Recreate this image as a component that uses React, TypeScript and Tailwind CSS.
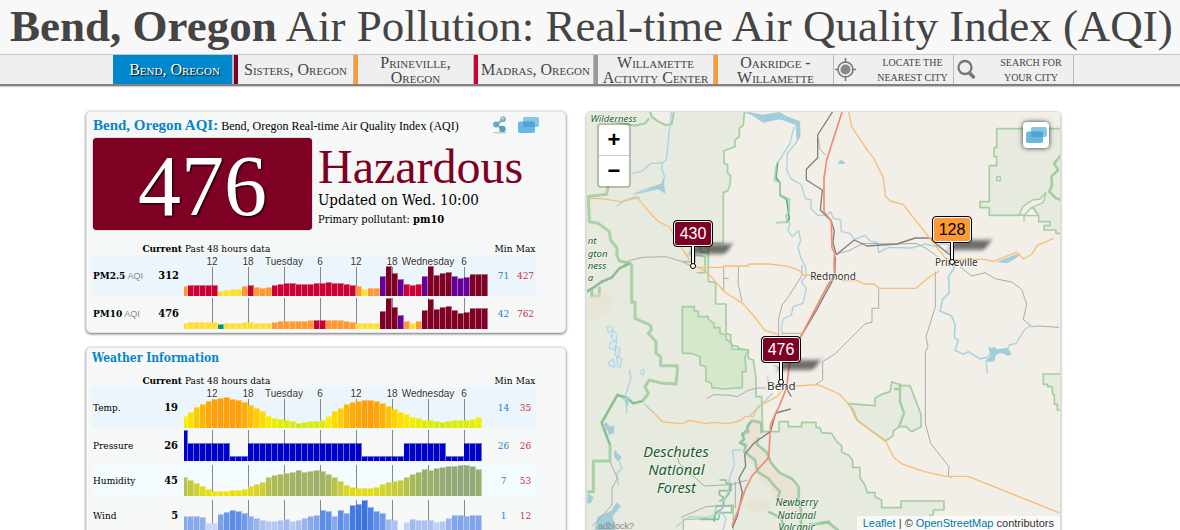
import React from "react";

type Bar = { h: number; color: string };
type Series = { name: string; unit?: string; current: number; min: number; max: number; bars: Bar[] };

const SERIF = "font-['Liberation_Serif','Times_New_Roman',serif]";
const WIDE = "font-['DejaVu_Serif_Condensed','DejaVu_Serif',serif]";

const AQI: Record<string, string> = {
  g: "#009966",
  y: "#ffde33",
  o: "#ff9933",
  r: "#cc0033",
  p: "#660099",
  m: "#7e0023",
};

const coded = (text: string): Bar[] =>
  text.split(" ").map((t) => ({ color: AQI[t[0]], h: Number(t.slice(1)) }));

const mix = (a: number[], b: number[], t: number) =>
  `rgb(${a.map((v, i) => Math.round(v + (b[i] - v) * t)).join(",")})`;

const ramp = (heights: number[], stops: number[][], lo: number, hi: number): Bar[] =>
  heights.map((h) => {
    const t = Math.min(1, Math.max(0, (h - lo) / (hi - lo))) * (stops.length - 1);
    const i = Math.min(stops.length - 2, Math.floor(t));
    return { h, color: mix(stops[i], stops[i + 1], t - i) };
  });

const rep = (h: number, n: number): number[] => Array(n).fill(h);

const pollutants: Series[] = [
  {
    name: "PM2.5", unit: "AQI", current: 312, min: 71, max: 427,
    bars: coded("o10 r11 r11 r11 r11 r11 y5 y6 y7 y7 o10 r11 o9 o8 o9 r11 r12 r13 r13 r12 r12 r12 r13 r13 r14 r13 r13 r12 r11 o10 y7 o8 o8 p20 m30 m23 p17 r12 r11 r12 p20 m30 m21 m23 m24 p20 p18 p19 m22 m22 m22"),
  },
  {
    name: "PM10", unit: "AQI", current: 476, min: 42, max: 762,
    bars: coded("y6 y7 y7 y7 y7 y7 g5 y6 y6 y6 y7 y7 y6 y6 y6 o7 o8 o8 o8 o8 o8 o9 r9 r9 o9 o9 o9 o8 o7 y6 y6 y6 y6 m18 m31 m22 p14 o8 y6 o8 m19 m30 m20 m22 m23 m19 m16 m17 m21 m21 m21"),
  },
];

const weather: Series[] = [
  {
    name: "Temp.", current: 19, min: 14, max: 35,
    bars: ramp(
      [12, 16, 21, 24, 27, 29, 30, 31, 29, 28, 26, 23, 20, 17, 12, 10, 9, 8, 7, 5, 6, 7, 7, 8, 12, 17, 20, 24, 26, 27, 28, 28, 27, 25, 22, 19, 16, 14, 11, 10, 8, 8, 7, 6, 7, 8, 8, 8, 9, 11],
      [[200, 236, 22], [250, 238, 0], [255, 205, 0], [255, 160, 10]], 5, 28),
  },
  {
    name: "Pressure", current: 26, min: 26, max: 26,
    bars: [31, ...rep(18, 7), ...rep(5, 3), ...rep(18, 19), ...rep(5, 7), ...rep(18, 7), ...rep(5, 3), ...rep(18, 3)].map((h) => ({ h, color: "#0000cc" })),
  },
  {
    name: "Humidity", current: 45, min: 7, max: 53,
    bars: ramp(
      [19, 16, 13, 10, 7, 5, 5, 5, 6, 6, 7, 10, 12, 14, 19, 21, 22, 23, 24, 26, 24, 25, 26, 25, 22, 19, 15, 11, 9, 8, 8, 8, 9, 12, 14, 15, 16, 19, 22, 24, 27, 26, 28, 29, 30, 30, 31, 31, 30, 27],
      [[236, 227, 10], [206, 209, 50], [168, 184, 92], [144, 168, 122]], 5, 31),
  },
  {
    name: "Wind", current: 5, min: 1, max: 12,
    bars: ramp(
      [15, 15, 15, 14, 8, 8, 17, 19, 21, 20, 18, 15, 13, 11, 10, 10, 11, 12, 10, 11, 13, 15, 16, 21, 20, 15, 21, 18, 26, 27, 31, 24, 20, 18, 12, 11, 4, 9, 12, 11, 11, 11, 9, 10, 13, 16, 16, 15, 16, 16],
      [[240, 244, 255], [160, 186, 240], [96, 144, 232], [58, 114, 224]], 4, 28),
  },
];

const ticks = ["12", "18", "Tuesday", "6", "12", "18", "Wednesday", "6"];

function BarChart({ bars, labels }: { bars: Bar[]; labels: boolean }) {
  const height = labels ? 40 : 31;
  return (
    <svg width="304" height={height} className="block">
      {ticks.map((_, i) => (
        <rect key={i} x={28 + 36 * i} y={labels ? 11 : 0} width="1" height={height} fill="#888" />
      ))}
      {bars.map((b, i) => {
        const x = i === 0 ? 0 : 6 * i - 2;
        const w = i === 0 ? 4 : 6;
        return (
          <g key={i} fill={b.color}>
            <rect x={x} y={height - b.h} width={w} height={b.h} opacity="0.55" />
            <rect x={x} y={height - b.h + 1} width={w - 1} height={b.h - 1} />
          </g>
        );
      })}
      {labels &&
        ticks.map((t, i) => (
          <text key={i} x={28 + 36 * i} y="9" textAnchor="middle" className="font-['Liberation_Sans',Arial,sans-serif] text-[10px]"
            fill="#333" stroke="#fff" strokeWidth="2" strokeOpacity="0.6" paintOrder="stroke">{t}</text>
        ))}
    </svg>
  );
}

function DataTable({ rows, bold }: { rows: Series[]; bold?: boolean }) {
  return (
    <table className={`w-[445px] table-fixed border-collapse text-[10px] leading-3 ${WIDE}`}>
      <colgroup>
        <col className="w-[58px]" />
        <col className="w-[34px]" />
        <col className="w-[309px]" />
        <col className="w-[21px]" />
        <col className="w-[23px]" />
      </colgroup>
      <thead>
        <tr className="h-[13px] whitespace-nowrap">
          <th colSpan={2} scope="col" className="p-0 pr-0.5 text-right font-bold">Current</th>
          <th scope="col" className="p-0 pl-px text-left font-normal">Past 48 hours data</th>
          <th scope="col" className="p-0 text-center font-normal">Min</th>
          <th scope="col" className="p-0 text-center font-normal">Max</th>
        </tr>
      </thead>
      <tbody>
        {rows.map((r, i) => (
          <tr key={r.name} className={i === 0 ? "h-[41px] bg-[#ecf5fb]" : i === 2 ? "h-[35px] bg-[#f4fbff]" : "h-[35px]"}>
            <th scope="row" className={`p-0 pl-px text-left whitespace-nowrap ${bold ? "font-bold" : "font-normal"}`}>
              {r.name}
              {r.unit && <span className="font-['Liberation_Sans',Arial,sans-serif] text-[9px] font-normal text-[#888]"> {r.unit}</span>}
            </th>
            <td className={`p-0 text-right text-[11px] font-bold ${bold ? "pr-[5px]" : "pr-1.5"}`}>{r.current}</td>
            <td className="p-0"><BarChart bars={r.bars} labels={i === 0} /></td>
            <td className="p-0 text-center text-[#2a83c4]">{r.min}</td>
            <td className="p-0 text-center text-[#cc3340]">{r.max}</td>
          </tr>
        ))}
      </tbody>
    </table>
  );
}

function ChatIcon() {
  return (
    <svg width="21" height="16" viewBox="0 0 21 16" className="block">
      <rect x="5" y="0" width="16" height="10" rx="2" fill="#86c6e6" />
      <rect x="0" y="4.500" width="17" height="11.500" rx="2" fill="#6bb8df" />
      <path d="M5 4.500h10q2 0 2 2V10H7q-2 0-2-2z" fill="#4ca5d4" />
    </svg>
  );
}

function ShareIcon() {
  return (
    <svg width="16" height="18" viewBox="0 0 16 18" className="block">
      <ellipse cx="8" cy="16.600" rx="7.500" ry="1" fill="#bbb" opacity="0.7" />
      <path d="M11 3.500 4.500 8.500 10.500 13" fill="none" stroke="#7fb3cc" strokeWidth="2.400" />
      <circle cx="11" cy="3.200" r="2.900" fill="#7fb3cc" />
      <circle cx="4" cy="8.500" r="2.900" fill="#6fa7c3" />
      <circle cx="10.500" cy="13" r="3.200" fill="#5c9dbf" />
      <circle cx="10.500" cy="2.600" r="1.300" fill="#b5d5e3" />
    </svg>
  );
}

const cities = [
  { label: "Bend, Oregon", bar: "", active: true },
  { label: "Sisters, Oregon", bar: "border-l-[#7e0023]" },
  { label: "Prineville, Oregon", bar: "border-l-[#ff9933]" },
  { label: "Madras, Oregon", bar: "border-l-[#cc0033]" },
  { label: "Willamette Activity Center", bar: "border-l-[#999999]" },
  { label: "Oakridge - Willamette", bar: "border-l-[#ff9933]" },
];

function Nav() {
  return (
    <nav className="flex h-8 shrink-0 border-t border-b-2 border-t-[#c4c4c4] border-b-[#808080] bg-[#efefef] pl-[113px] text-[#444] shadow-[0_1px_1px_#ccc]">
      {cities.map((c) =>
        c.active ? (
          <a key={c.label} href="#bend" className={`flex w-[120px] shrink-0 items-center justify-center border-r border-[#bbb] bg-[#0088cc] pl-1 text-base leading-[15px] text-white [font-variant:small-caps] [text-shadow:1px_1px_1px_#000] ${SERIF}`}>{c.label}</a>
        ) : (
          <a key={c.label} href="#city" className="flex w-[120px] shrink-0 border-l border-[#bbb]">
            <span className={`flex flex-1 items-center justify-center border-l-4 text-center text-base leading-[15px] [font-variant:small-caps] ${c.bar} ${SERIF}`}>{c.label}</span>
          </a>
        ),
      )}
      <a href="#nearest" className="flex w-[120px] shrink-0 items-center border-l border-[#bbb] pl-px">
        <svg width="21" height="23" viewBox="0 0 21 23">
          <circle cx="10.500" cy="11.500" r="7.500" fill="none" stroke="#777" strokeWidth="1.600" />
          <circle cx="10.500" cy="11.500" r="5" fill="#888" />
          <path d="M10.500 0v5M10.500 18v5M0 11.500h4M17 11.500h4" stroke="#777" strokeWidth="1.500" />
        </svg>
        <span className={`flex-1 pl-4 text-center text-[10px] leading-[15px] uppercase ${SERIF}`}>Locate the<br />nearest city</span>
      </a>
      <a href="#search" className="flex w-[121px] shrink-0 items-center border-x border-[#bbb] pl-[3px]">
        <svg width="18" height="21" viewBox="0 0 18 21" fill="none" stroke="#777">
          <circle cx="8" cy="8.500" r="6.500" strokeWidth="2.300" />
          <path d="m12.500 14 5 5" strokeWidth="3.500" />
        </svg>
        <span className={`flex-1 pl-3.5 text-center text-[10px] leading-[15px] uppercase ${SERIF}`}>Search for<br />your city</span>
      </a>
    </nav>
  );
}

const LAND = "#f2efe9";
const FOREST = "#e6eadf";
const EDGE = "#a3cfa0";

function Reserves() {
  return (
    <>
      <path fill={FOREST} stroke={EDGE} strokeWidth="5"
        d="M0 0H495L490 60 478 70V95L465 105V125L432 137V175L443 180V205L452 212 450 240 443 258 430 262V415H362V440L385 443V530L407 532V597H438V685L452 690V720L475 725V730L505 735V760L520 765 528 820V875H545L548 980H597V950H625V965H665V952H708V968H720L725 983 755 985 770 1010 785 1022V1042L805 1050 818 1065V1087H840V1118L855 1140 862 1163H885V1175L905 1185V1208H963V1188H1092V1215H1060V1230H1050V1300H0Z" />
      <path fill={LAND} stroke={EDGE} strokeWidth="6" d="M205 0 215 35 235 50 258 60 275 58 285 0Z" />
      <path stroke={EDGE} strokeWidth="6" d="M95 50 130 55 165 62 195 55 207 40" />
      <path fill="#d5e8cb" stroke={EDGE} strokeWidth="5" d="M307 605H343V618H355V635H385V643L402 655V668H420V685L438 690V702L455 715V732L505 735 495 755 498 800H487V848L430 852 395 848V835L378 828V785L360 780V755L335 745H307Z" />
      <path fill={LAND} stroke={EDGE} strokeWidth="4" d="M310 1300V1243L400 1241 410 1205 460 1200V1300" />
      <g stroke={EDGE} strokeWidth="9" opacity="0.9">
        <path d="M21 275 80 268 85 240M25 275 28 350 55 355 88 380 92 405 112 430 110 450 118 468 150 475 118 490 95 518 65 530 45 545 21 560" />
        <path d="M35 555V573H58V545M150 475 155 480V592H165V640L210 660 215 672 205 685 228 710V745L242 755V782H292V800L288 837 248 835 208 825 195 845 205 865 188 888 160 895 140 878 112 870 65 953 90 1020V1068H40V1160H21" />
      </g>
      <path stroke="#7eb98a" strokeWidth="4" d="M21 560 45 545 65 530 95 518 118 490 150 475M65 953 90 1020M65 953 112 870 140 878 160 895 188 888" />
      <path d="M307 470h38v-20l30 5v48h-25M362 415h23v28h-23" stroke={EDGE} strokeWidth="5" />

      <g transform="translate(720 0)">
        <path fill={FOREST} stroke={EDGE} strokeWidth="5" d="M740 71H530V128H522V155H530V182H508V290H480V308H508V331H597L612 310 640 308 656 332V350H690V362H672V375H708V385H740Z" />
        <path stroke={EDGE} strokeWidth="8" d="m740 130-12 10-8 15-18 20 12 20-20 20 2 25-8 20 20 20 32 10" />
        <path stroke={EDGE} strokeWidth="4" d="M530 215h11v12h-11zM612 350V332h44" />
        <path fill={LAND} stroke={EDGE} strokeWidth="4" d="m598 330 10-25 30-20 22-3 18-20-8 30-38 17-18 21z" />
      </g>
      <g transform="translate(720 630)">
        <path fill={FOREST} stroke={EDGE} strokeWidth="5" d="M84 266 165 272V250L185 238 210 230 215 200 235 208 240 212H270L303 298V335L275 350 258 335H238L220 348V362L196 378 112 316 100 285Z" />
        <path stroke={EDGE} strokeWidth="7" d="M240 205v55l12 35-15 40M222 222h15" />
        <path fill={FOREST} stroke={EDGE} strokeWidth="5" d="M740 177H670V208H683V215H697V235L703 240V268H712V285H740" />
        <path stroke={EDGE} strokeWidth="9" d="m0 625 25-3 30 25" />
      </g>
    </>
  );
}

function Newberry() {
  return (
    <g transform="translate(360 885)">
      <path fill="#eae3d5" d="M140 65h43v35l-8 32 30 25 12 30 25 30 55 50v70l-50-10-20-30-20-35-35-30-7-30-32-35-13-32z" />
      <path fill="#e9e0cf" opacity="0.7" d="m135 310 30-15 40 8 5 20-30 15-40-10z" />
      <g stroke="#98c79a" strokeWidth="8" opacity="0.85">
        <path d="M185 100 183 68 155 62 142 80 145 95 128 103 132 118 120 128 138 135 133 155 165 180 172 215 205 235 225 260 240 275 232 300" />
        <path d="m175 112-5 20 30 25 12 30 25 30 40 20 20 25-2 38 8 30v60M205 335l40 20 5 40M330 375l60-10" />
      </g>
      <path stroke="#7fc3a0" strokeWidth="4" d="m150 65-10 25-15 12 8 17-14 10 18 10" />
      <g stroke="#8cc592" strokeWidth="5">
        <path d="M58 240h20v10h15v22H58v12l15 10-15 10M45 318h50v20H60l-5 20H0" />
        <path d="m92 250-5 30-15 20-5 25-20 15-5 25" stroke="#72bba0" />
      </g>
    </g>
  );
}

function Waters() {
  return (
    <g transform="translate(18 15)">
      <g stroke="#a9d3e0" strokeWidth="4">
        <path d="m257 0-8 70-8 80-12 8-35 3-25 22-30 7M229 158l-2 20 8 20-3 30-40 5-50 20M232 225l5 25-20-15-60 15M92 288l20-14 50-12" />
        <path d="m478 8 50 12 50-10 20 15 42 15-4 50-32 40-2 50 12 25 32 20 12 40 18 5-2 25 20 20 25 2 15-12 8 20 22 5 2 35 25 5 15 18 30-12 18 18 20 3 4 30 30-15 70 2 40-12 32 8 20-10 35 10" />
        <path d="m624 50-12 50-38 60M600 330l12 10-6 20 12 20 20-18 6 30-8 20 8 30 15 30 2 25-15 18 15 20-10 45-30 10-5 25-25 12-5 30 4 10" />
        <path d="m562 765 20 10M560 850l-40 40-30 28M130 780l5 25-15 45 2 60M120 870l-12-5M545 800l2 20" />
        <path d="m88 1020 8 25 12 30-15 15 4 35M440 1020h25M440 1020l5 45-15 40-2 40-18 30-5 30 15 20-10 40M270 1250l40-30 50 2 45-12" />
        <path strokeWidth="5" d="m1105 465-3 15-14 18 2 50-20 20-8 35 35 15 10 25-2 40 12 8-10 30 25 12 15-8 35 22 18-5" />
        <path d="m1200 750 4 40M1200 745l20-20 40 5 10-25 20-5 25-40 20-15" />
      </g>
      <path stroke="#4fb08e" strokeWidth="5" d="m575 158-5 45 12 15v38l20 12 8 60-8 10" />
      <path stroke={EDGE} strokeWidth="6" d="m570 170-4 42 16 5v38l28 13v35l-10 15 6 18-36 2" opacity="0.8" />
      <g fill="#a2ced9">
        <path d="m205 228 22-8 6-20 2 45-20-8-45 10zM480 4l50 10 50-8 20 12 42 16 2 46-12 13-3-48-47-17-50 10zM35 1220l40-18 18-25 12 12-25 30 10 45H25zM50 950l10-15 12 15 12-5v25l-15 5-5-15zM115 870l15-8-5 30zM5 1150l18 12-8 18H3zM84 1022l24 20-12 12-12-14z" />
        <path d="m1206 710 12 5 5-5 12 8 30-5 12 20-12 5-20-12-15 10-5 18-20 2-3-8 12-10zM1232 456l45-18 28-9-12 14-30 17zM758 155l7-6 12 8v5h-20z" />
      </g>
      <path stroke="#92c6ed" strokeWidth="2" fill="#dbe8ea" d="m62 652 12-5 8 15-15 6zM80 660l14 12-3 22-15-8zM72 698l20-6-4 30-18-8zM88 710l14 4-5 28-10-6zM67 757l15-10 5 25-18-5zM92 740l16 5-6 30-8-8zM166 780l10-2-4 18-8-4z" />
    </g>
  );
}

function Roads() {
  return (
    <g transform="translate(18 15)">
      <g stroke="#ababab" strokeWidth="3">
        <path d="m4 540 60-30 65-58 40-10 70-2 48 14 32 16M175 882l30 28M362 866l22-12 50 2 20 4 30-18 30-8h25M72 1055l22 50-16 30v50l-60 65M275 1045l5 15 75 68 80-4 50-14M285 1222l75-32 60-4M413 470v70M458 470l-2 50 12 55M413 505h15M648 466v30l-38 60-22 30-10 40v100M585 670h60M448 1115v80" />
        <path d="m698 85 2 30 18 20M750 432l40-10 40-22 100 2 60-2 30 15 35 25M1122 470l35 28 40-10 30 18 50 10 30 22 15 45-10 45 25 22 20-2 62 4M1048 485v105l-28 90 6 30-8 15v215l16 60 55 70-2 25 10 10M878 535v60h-20v42l-20 4-90 90-38 24v55l-20 12" />
      </g>
      <g stroke="#808080" strokeWidth="4">
        <path d="m743 0-48 75v68l-34 35v32l48 30-6 60 32 32 10 30-4 35 9 35M750 435l55-45 38 18 90-6 55-18h45l20 20 45 35M748 440l-2 60-60 110-45 75M614 897l-45 12-15 55-50 35-28 35 3 35-20 35 10 45-15 70-15 35M598 830l18 30" />
      </g>
      <g stroke="#f6bf74" strokeWidth="4">
        <path d="m4 266 42 0 60 9 45-16 50 60 20 18 30 14 15 30 55 85 35 15 20 20 40 45 55 35 35 40 30 40 40 12M340 472h65l12-4h68l5-6h60l60 8 30 12 15 14h25M787 0l10 50 50 75 15 18 30 60 6 55 15 15 38 10 130 165h115l25 7 70-28 22 20 25-15 15-25 50-22M765 512h50l20 10h30l15 13h110l40-34 30-18" />
        <path d="m205 910 25 26 60 5 20-10 50 10 20-4 45 4 35-8 20-14h22l12-28 60-32 15-20M630 828l65-4 65 28 28 30 25 50 85 60 25 50 25 20 65 22 65 15h68l275 110" />
      </g>
      <path stroke="#f08a72" strokeWidth="5" d="m770 0-48 150-8 55v100l22 28 2 80 8 15-2 35 2 30-22 35-84 160-30 75-8 70-20 50-28 60-6 100-50 55-20 40-20 60-20 50" />
    </g>
  );
}

function MapDrawing() {
  return (
    <svg viewBox="21 21 1419 1254" preserveAspectRatio="xMidYMid slice" className="block h-full w-full" fill="none" strokeLinejoin="round">
      <rect x="0" y="0" width="1460" height="1300" fill={LAND} />
      <Reserves />
      <path fill="#eadfce" opacity="0.5" d="m25 580 50-25 28 25-20 45-58 30z" />
      <Newberry />
      <Waters />
      <Roads />
      <g className="font-['Noto_Sans',sans-serif]" stroke="#fff" strokeOpacity="0.6" strokeWidth="5" paintOrder="stroke" textAnchor="middle">
        <g fill="#17602a" className="italic">
          <text x="101" y="52" fontSize="29">Wilderness</text>
          <g fontSize="29" textAnchor="start">
            <text x="23" y="418">nt</text>
            <text x="23" y="455">gton</text>
            <text x="23" y="491">ness</text>
            <text x="23" y="527">a</text>
          </g>
          <g fontSize="44">
            <text x="288" y="1055">Deschutes</text>
            <text x="289" y="1110">National</text>
            <text x="289" y="1165">Forest</text>
          </g>
          <g fontSize="30">
            <text x="650" y="1204">Newberry</text>
            <text x="650" y="1241">National</text>
            <text x="650" y="1278">Volcanic</text>
          </g>
        </g>
        <g fill="#333">
          <text x="759" y="524" fontSize="30">Redmond</text>
          <text x="1129" y="483" fontSize="30">Prineville</text>
          <text x="604" y="854" fontSize="35">Bend</text>
        </g>
      </g>
      <text x="54" y="1272" fontSize="27" fill="#888" className="font-['Liberation_Sans',Arial,sans-serif]">adblock?</text>
    </svg>
  );
}

function Marker({ value, place, tone }: { value: number; place: string; tone: string }) {
  return (
    <button type="button" className={`absolute flex flex-col items-center ${place}`}>
      <span className="absolute top-6 left-5 h-2.5 w-9 skew-x-[-35deg] bg-black/55 blur-[2px]" />
      <span className={`relative flex h-[27px] w-10 items-center justify-center rounded-[4px] border border-black font-['Liberation_Sans',Arial,sans-serif] text-base leading-none shadow-[inset_0_0_0_1px_#fff] ${tone}`}>{value}</span>
      <span className="relative -mt-px h-[18px] w-1 border-x border-black bg-white" />
      <span className="relative -mt-px size-1.5 rounded-full border border-black bg-white" />
    </button>
  );
}

const card = "rounded-[5px] border border-[#e6e6e6] bg-[#f6f8f7] shadow-[0_1px_3px_rgba(0,0,0,0.6)]";

export default function App() {
  return (
    <div className="flex h-screen flex-col overflow-hidden bg-white text-black">
      <h1 className={`h-[54px] shrink-0 bg-[#f8f8f8] pl-2.5 text-[45px] leading-[52px] whitespace-nowrap text-[#444] ${SERIF}`}>
        <b>Bend, Oregon</b> Air Pollution: Real-time Air Quality Index (AQI)
      </h1>
      <Nav />
      <main className="flex min-h-0 flex-1 gap-5 pt-[25px] pl-[86px]">
        <div className="flex w-[480px] shrink-0 flex-col gap-3.5">
          <section className={`shrink-0 pb-px pl-[5px] ${card}`}>
            <header className="flex h-[26px] items-center pl-px">
              <h2 className={`text-[12px] whitespace-nowrap ${SERIF}`}>
                <b className="text-[15px] text-[#0a84c8]">Bend, Oregon AQI:</b> Bend, Oregon Real-time Air Quality Index (AQI)
              </h2>
              <div className="ml-auto flex gap-2.5 pr-[26px]">
                <button type="button" aria-label="Share"><ShareIcon /></button>
                <button type="button" aria-label="Comments"><ChatIcon /></button>
              </div>
            </header>
            <div className="flex h-[104px] gap-1.5 pl-px">
              <div className={`flex h-[92px] w-[219px] items-center justify-center rounded-[4px] bg-[#7e0023] pt-1 text-[86px] leading-none text-white shadow-[0_0_1px_#000] [text-shadow:1px_1px_2px_#000] ${SERIF}`}>476</div>
              <div>
                <p className={`pt-1.5 text-[48px] leading-[46px] text-[#7e0023] ${SERIF}`}>Hazardous</p>
                <p className={`text-[15px] leading-5 ${WIDE}`}>Updated on Wed. 10:00</p>
                <p className={`text-[11px] leading-5 ${WIDE}`}>Primary pollutant: <b>pm10</b></p>
              </div>
            </div>
            <DataTable rows={pollutants} bold />
          </section>
          <section className={`shrink-0 pb-1 pl-[5px] ${card}`}>
            <h2 className={`pb-1.5 text-[12px] leading-5 font-bold text-[#0a84c8] ${WIDE}`}>Weather Information</h2>
            <DataTable rows={weather} />
          </section>
        </div>
        <section aria-label="Map" className="relative max-w-[475px] min-w-0 flex-1 overflow-hidden rounded-t-[5px] border border-b-0 border-[#ddd] shadow-[0_1px_2px_rgba(0,0,0,0.5)]">
          <MapDrawing />
          <div className="absolute top-[11px] left-2.5 flex flex-col overflow-hidden rounded-[4px] border-2 border-black/20 bg-white bg-clip-padding font-['Liberation_Sans',Arial,sans-serif] text-[22px] leading-none font-bold">
            <button type="button" aria-label="Zoom in" className="h-[31px] w-[30px] border-b border-[#ccc]">+</button>
            <button type="button" aria-label="Zoom out" className="h-[30px] w-[30px]">−</button>
          </div>
          <button type="button" aria-label="Comments" className="absolute top-2.5 right-[11px] flex size-[26px] items-center justify-center rounded-[4px] bg-white shadow-[0_0_5px_rgba(0,0,0,0.8)]"><ChatIcon /></button>
          <Marker value={430} place="left-[86px] top-[108px]" tone="bg-[#7e0023] text-white" />
          <Marker value={128} place="left-[345px] top-[104px]" tone="bg-[#ff9933] text-black" />
          <Marker value={476} place="left-[174px] top-[224px]" tone="bg-[#7e0023] text-white" />
          <p className="absolute right-0 bottom-0 bg-white/70 px-1.5 font-['Liberation_Sans',Arial,sans-serif] text-[11px] leading-[14px] text-[#333]">
            <a href="#leaflet" className="text-[#0078a8]">Leaflet</a> | © <a href="#osm" className="text-[#0078a8]">OpenStreetMap</a> contributors
          </p>
        </section>
      </main>
    </div>
  );
}
